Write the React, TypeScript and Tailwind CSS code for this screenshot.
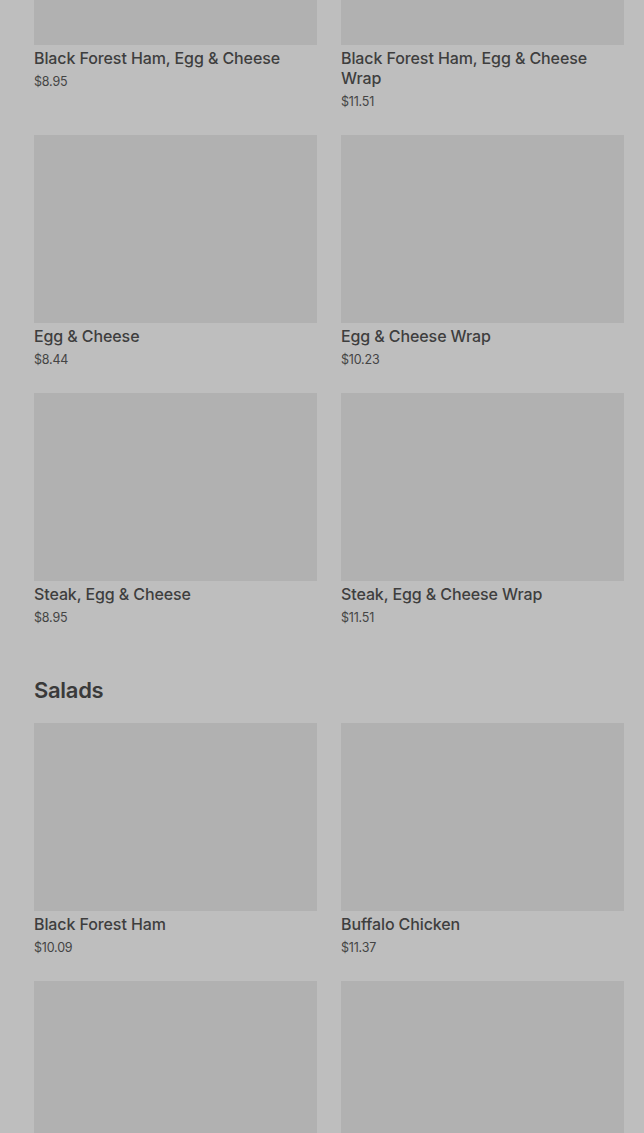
import React from 'react';

type Item = { name: string; price: string };

const breakfast: Item[] = [
  { name: 'Black Forest Ham, Egg & Cheese', price: '$8.95' },
  { name: 'Black Forest Ham, Egg & Cheese Wrap', price: '$11.51' },
  { name: 'Egg & Cheese', price: '$8.44' },
  { name: 'Egg & Cheese Wrap', price: '$10.23' },
  { name: 'Steak, Egg & Cheese', price: '$8.95' },
  { name: 'Steak, Egg & Cheese Wrap', price: '$11.51' },
];

const salads: Item[] = [
  { name: 'Black Forest Ham', price: '$10.09' },
  { name: 'Buffalo Chicken', price: '$11.37' },
  { name: 'Chicken & Bacon Ranch', price: '$11.37' },
  { name: 'Oven Roasted Turkey', price: '$10.09' },
];

const Card = ({ item }: { item: Item }) => (
  <div className="flex flex-col">
    <div className="h-[188px] w-full bg-[#b1b1b1]" />
    <div className="mt-[3px] text-[16px] leading-[20px] font-medium tracking-[-0.1px] text-[#3e3e3e]">{item.name}</div>
    <div className="mt-[4px] text-[12.5px] leading-[20px] tracking-[-0.2px] text-[#444444]">{item.price}</div>
  </div>
);

const Grid = ({ items }: { items: Item[] }) => (
  <div className="grid grid-cols-2 gap-x-[24px] gap-y-[23px]">
    {items.map((item) => (
      <Card key={item.name} item={item} />
    ))}
  </div>
);

export default function App() {
  return (
    <div className="h-[1133px] w-full overflow-hidden bg-[#bebebe]" style={{ fontFamily: 'Inter, "Noto Sans", sans-serif' }}>
      <div className="-mt-[143px] pl-[34px] pr-[20px]">
        <Grid items={breakfast} />
        <h2 className="mt-[48px] mb-[19px] text-[22px] leading-[28px] font-semibold tracking-[-0.3px] text-[#3a3a3a]">Salads</h2>
        <Grid items={salads} />
      </div>
    </div>
  );
}
